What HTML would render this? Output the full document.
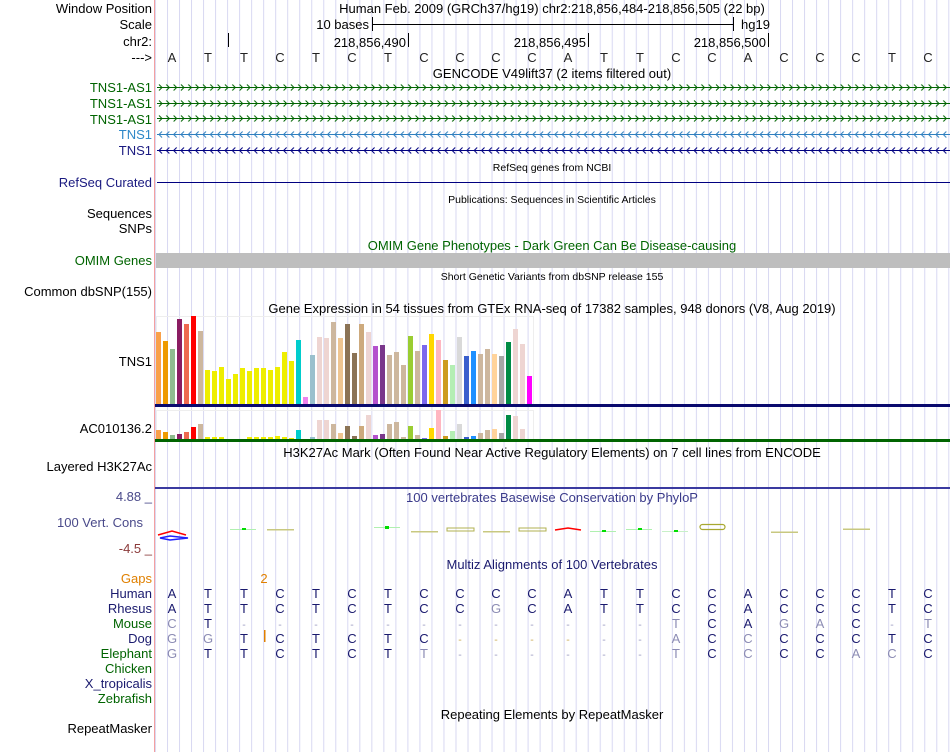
<!DOCTYPE html>
<html><head><meta charset="utf-8"><style>
html,body{margin:0;padding:0;background:#fff;width:950px;height:752px;overflow:hidden}
svg{display:block}
text{font-family:"Liberation Sans",Arial,sans-serif;font-size:13px}
.l{text-anchor:end}
.m{text-anchor:middle}
.s{font-size:10.5px}
</style></head><body>
<svg width="950" height="752" viewBox="0 0 950 752" xmlns="http://www.w3.org/2000/svg">
<defs>
<pattern id="vl" x="167" y="0" width="12.02" height="10" patternUnits="userSpaceOnUse"><rect x="0" y="0" width="1" height="10" fill="#d8d8f2"/></pattern>
<pattern id="fg" x="157" y="-5" width="7.33" height="10" patternUnits="userSpaceOnUse"><path d="M2,2 L5,5 L2,8" fill="none" stroke="#006400" stroke-width="1"/></pattern>
<pattern id="rb" x="157" y="-5" width="7.33" height="10" patternUnits="userSpaceOnUse"><path d="M5,2 L2,5 L5,8" fill="none" stroke="#2f7fbf" stroke-width="1"/></pattern>
<pattern id="rn" x="157" y="-5" width="7.33" height="10" patternUnits="userSpaceOnUse"><path d="M5,2 L2,5 L5,8" fill="none" stroke="#000080" stroke-width="1"/></pattern>
</defs>
<rect x="155" y="0" width="795" height="752" fill="url(#vl)"/>
<rect x="154" y="0" width="1" height="752" fill="#f4a0a0"/>

<!-- header -->
<text x="152" y="13" class="l">Window Position</text>
<text x="552" y="13" class="m">Human Feb. 2009 (GRCh37/hg19)   chr2:218,856,484-218,856,505 (22 bp)</text>
<text x="152" y="29" class="l">Scale</text>
<text x="369" y="29" class="l">10 bases</text>
<rect x="372" y="17" width="1" height="14" fill="#000"/>
<rect x="372" y="24" width="362" height="1" fill="#000"/>
<rect x="733" y="17" width="1" height="14" fill="#000"/>
<text x="741" y="29">hg19</text>
<text x="152" y="46" class="l">chr2:</text>
<rect x="228" y="33" width="1" height="14" fill="#000"/>
<text x="406" y="47" class="l">218,856,490</text><rect x="408" y="33" width="1" height="14" fill="#000"/>
<text x="586" y="47" class="l">218,856,495</text><rect x="588" y="33" width="1" height="14" fill="#000"/>
<text x="766" y="47" class="l">218,856,500</text><rect x="768" y="33" width="1" height="14" fill="#000"/>
<text x="152" y="62" class="l">---&gt;</text>
<g fill="#222">
<text x="172" y="62" class="m">A</text><text x="208" y="62" class="m">T</text><text x="244" y="62" class="m">T</text><text x="280" y="62" class="m">C</text><text x="316" y="62" class="m">T</text><text x="352" y="62" class="m">C</text><text x="388" y="62" class="m">T</text><text x="424" y="62" class="m">C</text><text x="460" y="62" class="m">C</text><text x="496" y="62" class="m">C</text><text x="532" y="62" class="m">C</text><text x="568" y="62" class="m">A</text><text x="604" y="62" class="m">T</text><text x="640" y="62" class="m">T</text><text x="676" y="62" class="m">C</text><text x="712" y="62" class="m">C</text><text x="748" y="62" class="m">A</text><text x="784" y="62" class="m">C</text><text x="820" y="62" class="m">C</text><text x="856" y="62" class="m">C</text><text x="892" y="62" class="m">T</text><text x="928" y="62" class="m">C</text>
</g>
<text x="552" y="78" class="m">GENCODE V49lift37 (2 items filtered out)</text>

<!-- genes -->
<text x="152" y="92" class="l" fill="#006400">TNS1-AS1</text>
<text x="152" y="108" class="l" fill="#006400">TNS1-AS1</text>
<text x="152" y="124" class="l" fill="#006400">TNS1-AS1</text>
<text x="152" y="139" class="l" fill="#2f88c8">TNS1</text>
<text x="152" y="155" class="l" fill="#1a1a80">TNS1</text>
<g transform="translate(0,87.5)"><rect x="157" y="-0.5" width="793" height="1" fill="#006400"/><rect x="157" y="-5" width="793" height="10" fill="url(#fg)"/></g>
<g transform="translate(0,103.5)"><rect x="157" y="-0.5" width="793" height="1" fill="#006400"/><rect x="157" y="-5" width="793" height="10" fill="url(#fg)"/></g>
<g transform="translate(0,118.5)"><rect x="157" y="-0.5" width="793" height="1" fill="#006400"/><rect x="157" y="-5" width="793" height="10" fill="url(#fg)"/></g>
<g transform="translate(0,134.5)"><rect x="157" y="-0.5" width="793" height="1" fill="#2f7fbf"/><rect x="157" y="-5" width="793" height="10" fill="url(#rb)"/></g>
<g transform="translate(0,150.5)"><rect x="157" y="-0.5" width="793" height="1" fill="#000080"/><rect x="157" y="-5" width="793" height="10" fill="url(#rn)"/></g>

<text x="552" y="171" class="m s">RefSeq genes from NCBI</text>
<text x="152" y="187" class="l" fill="#1a1a80">RefSeq Curated</text>
<rect x="157" y="182" width="793" height="1" fill="#000080"/>
<text x="552" y="203" class="m s">Publications: Sequences in Scientific Articles</text>
<text x="152" y="218" class="l">Sequences</text>
<text x="152" y="233" class="l">SNPs</text>
<text x="552" y="250" class="m" fill="#006400">OMIM Gene Phenotypes - Dark Green Can Be Disease-causing</text>
<text x="152" y="265" class="l" fill="#006400">OMIM Genes</text>
<rect x="156" y="253" width="794" height="15" fill="#bebebe"/>
<text x="552" y="280" class="m s">Short Genetic Variants from dbSNP release 155</text>
<text x="152" y="296" class="l">Common dbSNP(155)</text>
<text x="552" y="313" class="m">Gene Expression in 54 tissues from GTEx RNA-seq of 17382 samples, 948 donors (V8, Aug 2019)</text>
<text x="152" y="366" class="l">TNS1</text>
<text x="152" y="433" class="l">AC010136.2</text>

<rect x="156.5" y="316.5" width="377" height="88" fill="none" stroke="#eeeeee"/>
<rect x="156.5" y="410.5" width="377" height="29" fill="none" stroke="#eeeeee"/>
<g>
<rect x="156" y="332" width="5" height="72" fill="#f9a04a"/>
<rect x="163" y="341" width="5" height="63" fill="#ee9a00"/>
<rect x="170" y="349" width="5" height="55" fill="#8fbc8f"/>
<rect x="177" y="319" width="5" height="85" fill="#8b1c62"/>
<rect x="184" y="324" width="5" height="80" fill="#ee6a50"/>
<rect x="191" y="316" width="5" height="88" fill="#ff0000"/>
<rect x="198" y="331" width="5" height="73" fill="#cdb79e"/>
<rect x="205" y="370" width="5" height="34" fill="#eeee00"/>
<rect x="212" y="371" width="5" height="33" fill="#eeee00"/>
<rect x="219" y="367" width="5" height="37" fill="#eeee00"/>
<rect x="226" y="379" width="5" height="25" fill="#eeee00"/>
<rect x="233" y="374" width="5" height="30" fill="#eeee00"/>
<rect x="240" y="368" width="5" height="36" fill="#eeee00"/>
<rect x="247" y="371" width="5" height="33" fill="#eeee00"/>
<rect x="254" y="368" width="5" height="36" fill="#eeee00"/>
<rect x="261" y="368" width="5" height="36" fill="#eeee00"/>
<rect x="268" y="370" width="5" height="34" fill="#eeee00"/>
<rect x="275" y="367" width="5" height="37" fill="#eeee00"/>
<rect x="282" y="352" width="5" height="52" fill="#eeee00"/>
<rect x="289" y="361" width="5" height="43" fill="#eeee00"/>
<rect x="296" y="340" width="5" height="64" fill="#00cdcd"/>
<rect x="303" y="397" width="5" height="7" fill="#ee82ee"/>
<rect x="310" y="355" width="5" height="49" fill="#9ac0cd"/>
<rect x="317" y="337" width="5" height="67" fill="#eed5d2"/>
<rect x="324" y="338" width="5" height="66" fill="#eed5d2"/>
<rect x="331" y="322" width="5" height="82" fill="#cdb79e"/>
<rect x="338" y="338" width="5" height="66" fill="#eec591"/>
<rect x="345" y="324" width="5" height="80" fill="#8b7355"/>
<rect x="352" y="353" width="5" height="51" fill="#8b7355"/>
<rect x="359" y="324" width="5" height="80" fill="#cdaa7d"/>
<rect x="366" y="332" width="5" height="72" fill="#eed5d2"/>
<rect x="373" y="346" width="5" height="58" fill="#b452cd"/>
<rect x="380" y="345" width="5" height="59" fill="#7a378b"/>
<rect x="387" y="355" width="5" height="49" fill="#cdb79e"/>
<rect x="394" y="352" width="5" height="52" fill="#cdb79e"/>
<rect x="401" y="365" width="5" height="39" fill="#cdb79e"/>
<rect x="408" y="336" width="5" height="68" fill="#9acd32"/>
<rect x="415" y="351" width="5" height="53" fill="#cdb79e"/>
<rect x="422" y="345" width="5" height="59" fill="#7b68ee"/>
<rect x="429" y="334" width="5" height="70" fill="#ffd700"/>
<rect x="436" y="340" width="5" height="64" fill="#ffb6c1"/>
<rect x="443" y="360" width="5" height="44" fill="#cd9b1d"/>
<rect x="450" y="365" width="5" height="39" fill="#b4eeb4"/>
<rect x="457" y="337" width="5" height="67" fill="#d9d9d9"/>
<rect x="464" y="356" width="5" height="48" fill="#3a5fcd"/>
<rect x="471" y="351" width="5" height="53" fill="#1e90ff"/>
<rect x="478" y="354" width="5" height="50" fill="#cdb79e"/>
<rect x="485" y="349" width="5" height="55" fill="#cdb79e"/>
<rect x="492" y="354" width="5" height="50" fill="#ffd39b"/>
<rect x="499" y="356" width="5" height="48" fill="#a6a6a6"/>
<rect x="506" y="342" width="5" height="62" fill="#008b45"/>
<rect x="513" y="329" width="5" height="75" fill="#eed5d2"/>
<rect x="520" y="344" width="5" height="60" fill="#eed5d2"/>
<rect x="527" y="376" width="5" height="28" fill="#ff00ff"/>
</g>
<g>
<rect x="156" y="430" width="5" height="9" fill="#f9a04a"/>
<rect x="163" y="432" width="5" height="7" fill="#ee9a00"/>
<rect x="170" y="435" width="5" height="4" fill="#8fbc8f"/>
<rect x="177" y="434" width="5" height="5" fill="#8b1c62"/>
<rect x="184" y="432" width="5" height="7" fill="#ee6a50"/>
<rect x="191" y="427" width="5" height="12" fill="#ff0000"/>
<rect x="198" y="424" width="5" height="15" fill="#cdb79e"/>
<rect x="205" y="437" width="5" height="2" fill="#eeee00"/>
<rect x="212" y="437" width="5" height="2" fill="#eeee00"/>
<rect x="219" y="437" width="5" height="2" fill="#eeee00"/>
<rect x="268" y="437" width="5" height="2" fill="#eeee00"/>
<rect x="247" y="437" width="5" height="2" fill="#eeee00"/>
<rect x="254" y="437" width="5" height="2" fill="#eeee00"/>
<rect x="261" y="437" width="5" height="2" fill="#eeee00"/>
<rect x="275" y="436" width="5" height="3" fill="#eeee00"/>
<rect x="282" y="437" width="5" height="2" fill="#eeee00"/>
<rect x="289" y="438" width="5" height="1" fill="#eeee00"/>
<rect x="296" y="430" width="5" height="9" fill="#00cdcd"/>
<rect x="310" y="437" width="5" height="2" fill="#9ac0cd"/>
<rect x="317" y="420" width="5" height="19" fill="#eed5d2"/>
<rect x="324" y="420" width="5" height="19" fill="#eed5d2"/>
<rect x="331" y="424" width="5" height="15" fill="#cdb79e"/>
<rect x="338" y="433" width="5" height="6" fill="#eec591"/>
<rect x="345" y="426" width="5" height="13" fill="#8b7355"/>
<rect x="352" y="436" width="5" height="3" fill="#8b7355"/>
<rect x="359" y="426" width="5" height="13" fill="#cdaa7d"/>
<rect x="366" y="415" width="5" height="24" fill="#eed5d2"/>
<rect x="373" y="435" width="5" height="4" fill="#b452cd"/>
<rect x="380" y="434" width="5" height="5" fill="#7a378b"/>
<rect x="387" y="424" width="5" height="15" fill="#cdb79e"/>
<rect x="394" y="422" width="5" height="17" fill="#cdb79e"/>
<rect x="401" y="437" width="5" height="2" fill="#cdb79e"/>
<rect x="408" y="426" width="5" height="13" fill="#9acd32"/>
<rect x="415" y="435" width="5" height="4" fill="#cdb79e"/>
<rect x="422" y="438" width="5" height="1" fill="#7b68ee"/>
<rect x="429" y="428" width="5" height="11" fill="#ffd700"/>
<rect x="436" y="410" width="5" height="29" fill="#ffb6c1"/>
<rect x="443" y="436" width="5" height="3" fill="#cd9b1d"/>
<rect x="450" y="431" width="5" height="8" fill="#b4eeb4"/>
<rect x="457" y="424" width="5" height="15" fill="#d9d9d9"/>
<rect x="464" y="437" width="5" height="2" fill="#3a5fcd"/>
<rect x="471" y="436" width="5" height="3" fill="#1e90ff"/>
<rect x="478" y="433" width="5" height="6" fill="#cdb79e"/>
<rect x="485" y="430" width="5" height="9" fill="#cdb79e"/>
<rect x="492" y="429" width="5" height="10" fill="#ffd39b"/>
<rect x="499" y="433" width="5" height="6" fill="#a6a6a6"/>
<rect x="506" y="415" width="5" height="24" fill="#008b45"/>
<rect x="513" y="416" width="5" height="23" fill="#eed5d2"/>
<rect x="520" y="429" width="5" height="10" fill="#eed5d2"/>
</g>
<rect x="155" y="404" width="795" height="3" fill="#0a0a6e"/>
<rect x="155" y="439" width="795" height="3" fill="#006400"/>

<text x="552" y="457" class="m">H3K27Ac Mark (Often Found Near Active Regulatory Elements) on 7 cell lines from ENCODE</text>
<text x="152" y="471" class="l">Layered H3K27Ac</text>
<rect x="155" y="487" width="795" height="2" fill="#3a3aa0"/>

<text x="152" y="501" class="l" fill="#4a4a8a">4.88 _</text>
<text x="552" y="502" class="m" fill="#3a3a8a">100 vertebrates Basewise Conservation by PhyloP</text>
<text x="100" y="527" class="m" fill="#4a4a8a">100 Vert. Cons</text>
<text x="152" y="553" class="l" fill="#8b3a3a">-4.5 _</text>
<!-- phylop glyphs -->
<path d="M158,535 L172,531 L186,535" fill="none" stroke="#ff0000" stroke-width="1.5"/>
<path d="M160,538 L170,536 L188,538 L170,540 Z" fill="none" stroke="#2020ff" stroke-width="1.5"/>
<rect x="230" y="529" width="26" height="1" fill="#b0f0b0"/><rect x="242" y="528" width="4" height="2" fill="#00dd00"/>
<rect x="267" y="529" width="27" height="1.5" fill="#c8c880"/>
<rect x="374" y="527" width="26" height="1" fill="#b0f0b0"/><rect x="385" y="526" width="4" height="3" fill="#00dd00"/>
<rect x="411" y="531" width="27" height="1.5" fill="#c8c880"/>
<rect x="447" y="528" width="27" height="3" fill="none" stroke="#b0b050" stroke-width="1"/>
<rect x="483" y="531" width="27" height="1.5" fill="#c8c880"/>
<rect x="519" y="528" width="27" height="3" fill="none" stroke="#b0b050" stroke-width="1"/>
<path d="M555,530 L568,528 L581,530" fill="none" stroke="#ff0000" stroke-width="1.5"/>
<rect x="590" y="531" width="26" height="1" fill="#b0f0b0"/><rect x="602" y="530" width="4" height="2" fill="#00dd00"/>
<rect x="626" y="529" width="26" height="1" fill="#b0f0b0"/><rect x="638" y="528" width="4" height="2" fill="#00dd00"/>
<rect x="662" y="531" width="26" height="1" fill="#c8f0c8"/><rect x="674" y="530" width="4" height="2" fill="#00dd00"/>
<rect x="700" y="524.5" width="25" height="5" rx="2.5" fill="none" stroke="#a8a830" stroke-width="1.2"/>
<rect x="771" y="531.5" width="27" height="1.5" fill="#c8c880"/>
<rect x="843" y="528.5" width="27" height="1.5" fill="#c8c880"/>

<text x="552" y="569" class="m" fill="#1a1a6e">Multiz Alignments of 100 Vertebrates</text>
<text x="152" y="583" class="l" fill="#e08000">Gaps</text>
<text x="264" y="583" class="m" fill="#e08000">2</text>
<text x="152" y="598" class="l" fill="#1a1a6e">Human</text>
<text x="152" y="613" class="l" fill="#1a1a6e">Rhesus</text>
<text x="152" y="628" class="l" fill="#006400">Mouse</text>
<text x="152" y="643" class="l" fill="#1a1a6e">Dog</text>
<text x="152" y="658" class="l" fill="#006400">Elephant</text>
<text x="152" y="673" class="l" fill="#006400">Chicken</text>
<text x="152" y="688" class="l" fill="#1a1a6e">X_tropicalis</text>
<text x="152" y="703" class="l" fill="#006400">Zebrafish</text>
<rect x="264" y="630" width="1.5" height="12" fill="#e08000"/>

<g fill="#1a1a6e">
<text x="172" y="598" class="m">A</text><text x="208" y="598" class="m">T</text><text x="244" y="598" class="m">T</text><text x="280" y="598" class="m">C</text><text x="316" y="598" class="m">T</text><text x="352" y="598" class="m">C</text><text x="388" y="598" class="m">T</text><text x="424" y="598" class="m">C</text><text x="460" y="598" class="m">C</text><text x="496" y="598" class="m">C</text><text x="532" y="598" class="m">C</text><text x="568" y="598" class="m">A</text><text x="604" y="598" class="m">T</text><text x="640" y="598" class="m">T</text><text x="676" y="598" class="m">C</text><text x="712" y="598" class="m">C</text><text x="748" y="598" class="m">A</text><text x="784" y="598" class="m">C</text><text x="820" y="598" class="m">C</text><text x="856" y="598" class="m">C</text><text x="892" y="598" class="m">T</text><text x="928" y="598" class="m">C</text>
<text x="172" y="613" class="m">A</text><text x="208" y="613" class="m">T</text><text x="244" y="613" class="m">T</text><text x="280" y="613" class="m">C</text><text x="316" y="613" class="m">T</text><text x="352" y="613" class="m">C</text><text x="388" y="613" class="m">T</text><text x="424" y="613" class="m">C</text><text x="460" y="613" class="m">C</text><text x="496" y="613" class="m" fill="#8c8cb4">G</text><text x="532" y="613" class="m">C</text><text x="568" y="613" class="m">A</text><text x="604" y="613" class="m">T</text><text x="640" y="613" class="m">T</text><text x="676" y="613" class="m">C</text><text x="712" y="613" class="m">C</text><text x="748" y="613" class="m">A</text><text x="784" y="613" class="m">C</text><text x="820" y="613" class="m">C</text><text x="856" y="613" class="m">C</text><text x="892" y="613" class="m">T</text><text x="928" y="613" class="m">C</text>
<text x="172" y="628" class="m" fill="#8c8cb4">C</text><text x="208" y="628" class="m">T</text>
<g fill="#9a9ac0"><text x="244" y="628" class="m s">-</text><text x="280" y="628" class="m s">-</text><text x="316" y="628" class="m s">-</text><text x="352" y="628" class="m s">-</text><text x="388" y="628" class="m s">-</text><text x="424" y="628" class="m s">-</text><text x="460" y="628" class="m s">-</text><text x="496" y="628" class="m s">-</text><text x="532" y="628" class="m s">-</text><text x="568" y="628" class="m s">-</text><text x="604" y="628" class="m s">-</text><text x="640" y="628" class="m s">-</text><text x="892" y="628" class="m s">-</text></g>
<text x="676" y="628" class="m" fill="#8c8cb4">T</text><text x="712" y="628" class="m">C</text><text x="748" y="628" class="m">A</text><text x="784" y="628" class="m" fill="#8c8cb4">G</text><text x="820" y="628" class="m" fill="#8c8cb4">A</text><text x="856" y="628" class="m">C</text><text x="928" y="628" class="m" fill="#8c8cb4">T</text>
<text x="172" y="643" class="m" fill="#8c8cb4">G</text><text x="208" y="643" class="m" fill="#8c8cb4">G</text><text x="244" y="643" class="m">T</text><text x="280" y="643" class="m">C</text><text x="316" y="643" class="m">T</text><text x="352" y="643" class="m">C</text><text x="388" y="643" class="m">T</text><text x="424" y="643" class="m">C</text>
<g fill="#c8a850"><text x="460" y="643" class="m s">-</text><text x="496" y="643" class="m s">-</text><text x="532" y="643" class="m s">-</text><text x="568" y="643" class="m s">-</text></g>
<g fill="#9a9ac0"><text x="604" y="643" class="m s">-</text><text x="640" y="643" class="m s">-</text></g>
<text x="676" y="643" class="m" fill="#8c8cb4">A</text><text x="712" y="643" class="m">C</text><text x="748" y="643" class="m" fill="#8c8cb4">C</text><text x="784" y="643" class="m">C</text><text x="820" y="643" class="m">C</text><text x="856" y="643" class="m">C</text><text x="892" y="643" class="m">T</text><text x="928" y="643" class="m">C</text>
<text x="172" y="658" class="m" fill="#8c8cb4">G</text><text x="208" y="658" class="m">T</text><text x="244" y="658" class="m">T</text><text x="280" y="658" class="m">C</text><text x="316" y="658" class="m">T</text><text x="352" y="658" class="m">C</text><text x="388" y="658" class="m">T</text><text x="424" y="658" class="m" fill="#8c8cb4">T</text>
<g fill="#9a9ac0"><text x="460" y="658" class="m s">-</text><text x="496" y="658" class="m s">-</text><text x="532" y="658" class="m s">-</text><text x="568" y="658" class="m s">-</text><text x="604" y="658" class="m s">-</text><text x="640" y="658" class="m s">-</text></g>
<text x="676" y="658" class="m" fill="#8c8cb4">T</text><text x="712" y="658" class="m">C</text><text x="748" y="658" class="m" fill="#8c8cb4">C</text><text x="784" y="658" class="m">C</text><text x="820" y="658" class="m">C</text><text x="856" y="658" class="m" fill="#8c8cb4">A</text><text x="892" y="658" class="m" fill="#8c8cb4">C</text><text x="928" y="658" class="m">C</text>
</g>

<text x="552" y="719" class="m">Repeating Elements by RepeatMasker</text>
<text x="152" y="733" class="l">RepeatMasker</text>
</svg>
</body></html>
